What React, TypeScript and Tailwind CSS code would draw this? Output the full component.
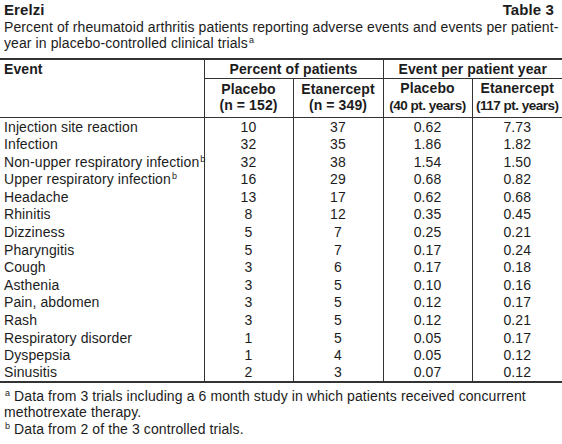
const rows: [string, boolean, string, string, string, string][] = [
  ["Injection site reaction", false, "10", "37", "0.62", "7.73"],
  ["Infection", false, "32", "35", "1.86", "1.82"],
  ["Non-upper respiratory infection", true, "32", "38", "1.54", "1.50"],
  ["Upper respiratory infection", true, "16", "29", "0.68", "0.82"],
  ["Headache", false, "13", "17", "0.62", "0.68"],
  ["Rhinitis", false, "8", "12", "0.35", "0.45"],
  ["Dizziness", false, "5", "7", "0.25", "0.21"],
  ["Pharyngitis", false, "5", "7", "0.17", "0.24"],
  ["Cough", false, "3", "6", "0.17", "0.18"],
  ["Asthenia", false, "3", "5", "0.10", "0.16"],
  ["Pain, abdomen", false, "3", "5", "0.12", "0.17"],
  ["Rash", false, "3", "5", "0.12", "0.21"],
  ["Respiratory disorder", false, "1", "5", "0.05", "0.17"],
  ["Dyspepsia", false, "1", "4", "0.05", "0.12"],
  ["Sinusitis", false, "2", "3", "0.07", "0.12"],
];

function Sup({ children }: { children: string }) {
  return <sup className="text-[9px] leading-none relative top-[-5px] ml-[1px]">{children}</sup>;
}

export default function App() {
  return (
    <div className="w-[562px] h-[444px] bg-white text-[#1c1c1c] font-['Liberation_Sans',Arial,sans-serif] text-[14px] tracking-[0.1px] leading-[16.5px] pt-[2px]">
      <div className="flex justify-between px-[4px] font-bold text-[15px]">
        <span>Erelzi</span>
        <span className="pr-[4px]">Table 3</span>
      </div>
      <p className="px-[4px] whitespace-nowrap">
        Percent of rheumatoid arthritis patients reporting adverse events and events per patient-
        <br />
        year in placebo-controlled clinical trials<Sup>a</Sup>
      </p>

      <table className="mt-[6px] w-full table-fixed border-collapse">
        <colgroup>
          <col className="w-[204px]" />
          <col className="w-[89px]" />
          <col className="w-[90px]" />
          <col className="w-[89px]" />
          <col className="w-[90px]" />
        </colgroup>
        <thead className="font-bold">
          <tr className="border-t-2 border-[#333]">
            <th rowSpan={2} className="text-left align-top pl-[4px] pt-[1px] border-r-[1.5px] border-[#333] border-b-[1.5px]">
              Event
            </th>
            <th colSpan={2} className="h-[20px] border-r-[1.5px] border-b-[1.5px] border-[#333] text-center">
              Percent of patients
            </th>
            <th colSpan={2} className="border-b-[1.5px] border-[#333] text-center">
              Event per patient year
            </th>
          </tr>
          <tr className="border-b-[1.5px] border-[#333]">
            <th className="h-[39px] text-center border-r-[1.5px] border-[#333] pb-[2px]">
              Placebo
              <br />
              (n = 152)
            </th>
            <th className="text-center border-r-[1.5px] border-[#333] pb-[2px]">
              Etanercept
              <br />
              (n = 349)
            </th>
            <th className="text-center border-r-[1.5px] border-[#333] pb-[2px] text-[13.5px] tracking-[-0.5px] whitespace-nowrap">
              <span className="text-[14px] tracking-[0.1px]">Placebo</span>
              <br />
              (40 pt. years)
            </th>
            <th className="text-center pb-[2px] text-[13.5px] tracking-[-0.5px] whitespace-nowrap">
              <span className="text-[14px] tracking-[0.1px]">Etanercept</span>
              <br />
              (117 pt. years)
            </th>
          </tr>
        </thead>
        <tbody className="border-b-2 border-[#333]">
          {rows.map(([name, sup, a, b, c, d], i) => (
            <tr key={name} className="h-[17.6px]">
              <td className={"pl-[4px] border-r-[1.5px] border-[#333] whitespace-nowrap" + (i === 0 ? " pt-[1px]" : "")}>
                {name}
                {sup && <Sup>b</Sup>}
              </td>
              <td className="text-center border-r-[1.5px] border-[#333]">{a}</td>
              <td className="text-center border-r-[1.5px] border-[#333]">{b}</td>
              <td className="text-center border-r-[1.5px] border-[#333]">{c}</td>
              <td className="text-center">{d}</td>
            </tr>
          ))}
        </tbody>
      </table>

      <div className="px-[4px] pt-[5px] whitespace-nowrap">
        <p>
          <Sup>a</Sup> Data from 3 trials including a 6 month study in which patients received concurrent
          <br />
          methotrexate therapy.
        </p>
        <p>
          <Sup>b</Sup> Data from 2 of the 3 controlled trials.
        </p>
      </div>
    </div>
  );
}
